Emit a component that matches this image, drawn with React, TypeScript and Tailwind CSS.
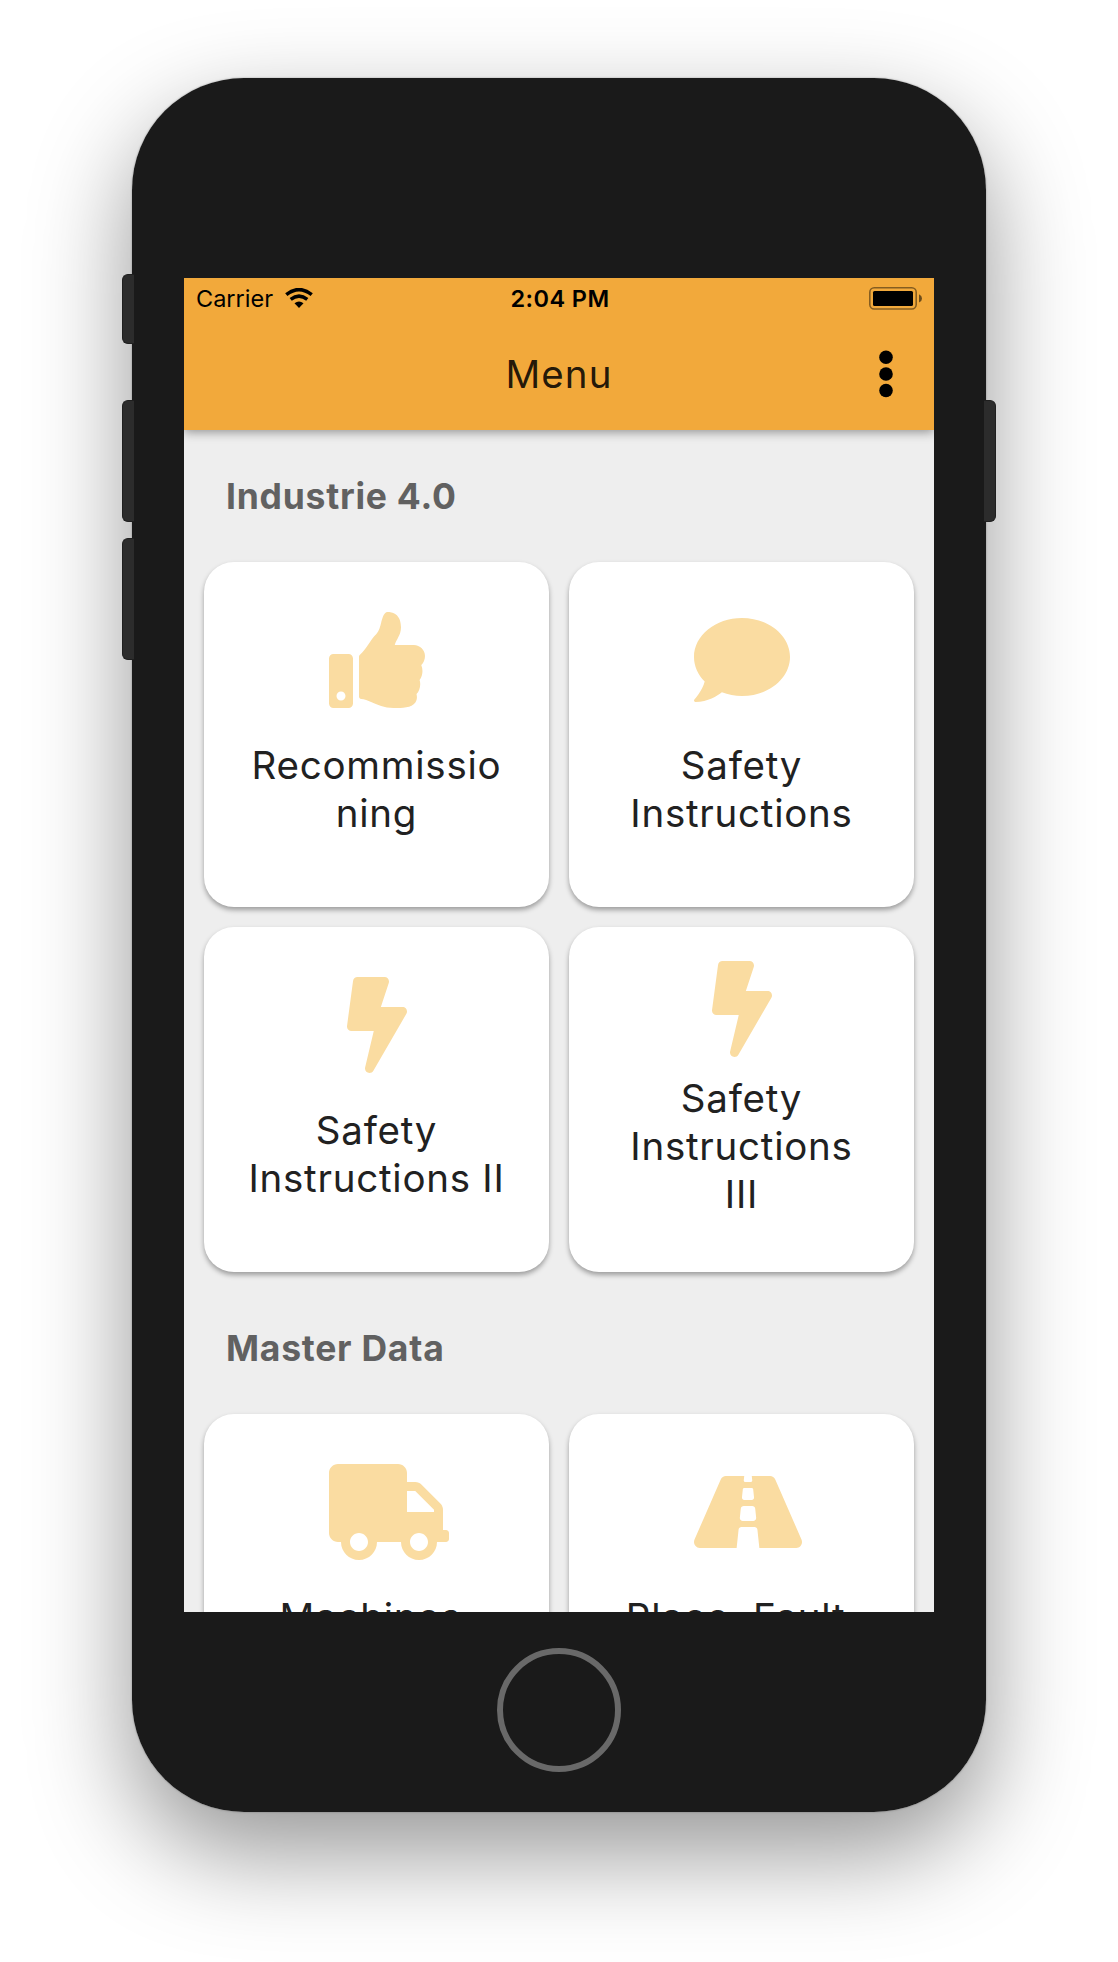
import React from "react";
import { FaBolt, FaComment, FaRoad, FaThumbsUp, FaTruck } from "react-icons/fa";
import type { IconType } from "react-icons";

type Tile = { icon: IconType; width: number; lines: string[] };

const industrie: Tile[] = [
  { icon: FaThumbsUp, width: 96, lines: ["Recommissio", "ning"] },
  { icon: FaComment, width: 96, lines: ["Safety", "Instructions"] },
  { icon: FaBolt, width: 60, lines: ["Safety", "Instructions II"] },
  { icon: FaBolt, width: 60, lines: ["Safety", "Instructions", "III"] },
];

const masterData: Tile[] = [
  { icon: FaTruck, width: 120, lines: ["Machines,"] },
  { icon: FaRoad, width: 108, lines: ["Place, Fault,"] },
];

function Card({ icon: Icon, width, lines }: Tile) {
  return (
    <div className="flex h-[345px] flex-col items-center justify-evenly rounded-[30px] bg-white pb-[18px] shadow-[0_3px_5px_rgba(0,0,0,0.34)]">
      <div className={"-mb-[17px] flex h-24 w-24 shrink-0 " + (width < 96 ? "justify-center" : "justify-start")}>
        <Icon className="h-24 shrink-0 text-[#fadca1]" style={{ width }} />
      </div>
      <div className="mb-[2px] min-h-24 text-center text-[38.5px] leading-[48px] font-[370] tracking-[0.75px] whitespace-pre text-[#212121]">
        {lines.map((line) => (
          <div key={line}>{line}</div>
        ))}
      </div>
    </div>
  );
}

function Section({ title, tiles }: { title: string; tiles: Tile[] }) {
  return (
    <section className="px-5 pb-2.5">
      <h2 className="flex h-[132px] items-center pt-px pl-[22px] text-[35.5px] font-bold tracking-[0.75px] text-[#616161]">
        {title}
      </h2>
      <div className="grid grid-cols-[345px_345px] gap-5">
        {tiles.map((tile) => (
          <Card key={tile.lines.join(" ")} {...tile} />
        ))}
      </div>
    </section>
  );
}

function Wifi() {
  return (
    <svg width="28" height="20" viewBox="0 0 28 20" fill="none" stroke="black">
      <path d="M1.3 6.6 Q14 -3.4 26.7 6.6" strokeWidth="3.6" />
      <path d="M5.7 11.4 Q14 4.9 22.3 11.4" strokeWidth="3.5" />
      <path d="M9.5 15.2 Q14 11.8 18.5 15.2 L14 20 Z" fill="black" stroke="none" />
    </svg>
  );
}

function Battery() {
  return (
    <svg width="54" height="23" viewBox="0 0 54 23">
      <rect x="0.8" y="0.8" width="46.4" height="21.2" rx="4.4" fill="none" stroke="black" strokeOpacity="0.45" strokeWidth="1.6" />
      <rect x="4" y="4" width="40" height="15" rx="1.6" fill="black" />
      <path d="M50 7.2 Q53 8.6 53 11.4 Q53 14.2 50 15.6 Z" fill="black" fillOpacity="0.55" />
    </svg>
  );
}

function StatusBar() {
  return (
    <div className="grid h-10 grid-cols-3 grid-rows-[40px] items-center text-[23.5px] leading-[38px] text-black">
      <div className="flex items-center gap-3 pl-3">
        <span className="pt-0.5">Carrier</span>
        <Wifi />
      </div>
      <span className="pt-0.5 pl-0.5 text-center font-semibold tracking-[0.45px]">2:04 PM</span>
      <div className="flex justify-end pr-[11px]">
        <Battery />
      </div>
    </div>
  );
}

function Header() {
  return (
    <header className="relative h-[152px] bg-[#f2a93b] shadow-[0_2px_10px_rgba(0,0,0,0.4)]">
      <StatusBar />
      <div className="grid h-28 grid-cols-3 items-center">
        <span />
        <h1 className="text-center text-[38.5px] leading-[48px] tracking-[1.1px] text-black/87">Menu</h1>
        <div className="flex justify-end pr-[41px]">
          <svg width="14" height="48" viewBox="0 0 14 48">
            <circle cx="7" cy="7.3" r="6.8" />
            <circle cx="7" cy="24" r="6.8" />
            <circle cx="7" cy="40.5" r="6.8" />
          </svg>
        </div>
      </div>
    </header>
  );
}

export default function App() {
  return (
    <main className="h-[1962px] w-[1118px] overflow-hidden bg-white pt-[78px] pl-[132px] font-['Inter',sans-serif]">
      <div className="relative h-[1734px] w-[854px] rounded-[112px] shadow-[0_0_2px_rgba(0,0,0,0.35),0_40px_100px_rgba(0,0,0,0.42)]">
        <div className="absolute top-[196px] -left-[10px] z-10 h-[70px] w-3 rounded-l-[6px] border border-r-0 border-[#1f1f1f] bg-[#2c2c2c]" />
        <div className="absolute top-[322px] -left-[10px] z-10 h-[122px] w-3 rounded-l-[6px] border border-r-0 border-[#1f1f1f] bg-[#2c2c2c]" />
        <div className="absolute top-[460px] -left-[10px] z-10 h-[122px] w-3 rounded-l-[6px] border border-r-0 border-[#1f1f1f] bg-[#2c2c2c]" />
        <div className="absolute top-[322px] -right-[10px] z-10 h-[122px] w-3 rounded-r-[6px] border border-l-0 border-[#1f1f1f] bg-[#2c2c2c]" />
        <div className="flex h-full flex-col items-center rounded-[112px] bg-[#1a1a1a] pt-[200px]">
          <div className="h-[1334px] w-[750px] shrink-0 overflow-hidden bg-[#eeeeee]">
            <Header />
            <Section title="Industrie 4.0" tiles={industrie} />
            <Section title="Master Data" tiles={masterData} />
          </div>
          <button aria-label="Home" className="mt-9 h-[124px] w-[124px] shrink-0 rounded-full border-[6px] border-[#696969]" />
        </div>
      </div>
    </main>
  );
}
